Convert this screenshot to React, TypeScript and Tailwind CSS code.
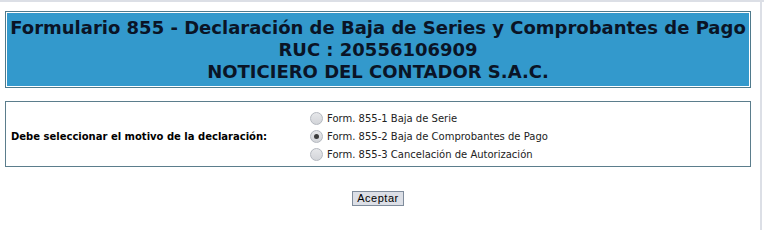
import React, { useState } from 'react'

const opciones = [
    { id: '1', label: 'Form. 855-1 Baja de Serie' },
    { id: '2', label: 'Form. 855-2 Baja de Comprobantes de Pago' },
    { id: '3', label: 'Form. 855-3 Cancelación de Autorización' },
]

const Radio: React.FC<{ checked: boolean; onClick: () => void }> = ({ checked, onClick }) => (
    <span
        onClick={onClick}
        className="w-[13px] h-[13px] rounded-full border border-[#b4b8bf] bg-gradient-to-b from-[#e6e7ea] to-[#d3d5d9] flex items-center justify-center shrink-0 cursor-pointer"
    >
        {checked && <span className="w-[5px] h-[5px] rounded-full bg-[#3c3c3c]" />}
    </span>
)

export default function App() {
    const [motivo, setMotivo] = useState('2')

    return (
        <div className="w-[764px] h-[230px] bg-white border-t-2 border-[#dcdfe6] overflow-hidden">
            <div className="w-[762px] h-full border-r-2 border-[#dcdfe6] pl-[5px] pt-[9px] font-['DejaVu_Sans',Verdana,sans-serif]">
                <div className="w-[746px] border border-[#4f7a8c] p-px">
                    <div className="bg-[#3399cc] text-[#0a1426] font-bold text-[18px] leading-[22px] text-center pt-[4px] pb-[3px]">
                        <div>Formulario 855 - Declaración de Baja de Series y Comprobantes de Pago</div>
                        <div>RUC : 20556106909</div>
                        <div>NOTICIERO DEL CONTADOR S.A.C.</div>
                    </div>
                </div>

                <div className="w-[746px] h-[66px] mt-[13px] border border-[#5b7d8c] flex items-center pt-[5px]">
                    <div className="w-[304px] pl-[5px] font-bold text-[10px] text-black">
                        Debe seleccionar el motivo de la declaración:
                    </div>
                    <div className="flex flex-col gap-[5px]">
                        {opciones.map(op => (
                            <label key={op.id} className="flex items-center gap-[4px] h-[13px] text-[10px] text-[#222]">
                                <Radio checked={motivo === op.id} onClick={() => setMotivo(op.id)} />
                                <span>{op.label}</span>
                            </label>
                        ))}
                    </div>
                </div>

                <div className="w-[746px] flex justify-center mt-[24px]">
                    <button className="h-[15px] px-[4px] bg-[#dcdfe6] border border-[#7f8c9c] text-[11px] leading-[13px] text-black font-['Liberation_Sans',Arial,sans-serif] tracking-[0.5px]">
                        Aceptar
                    </button>
                </div>
            </div>
        </div>
    )
}
